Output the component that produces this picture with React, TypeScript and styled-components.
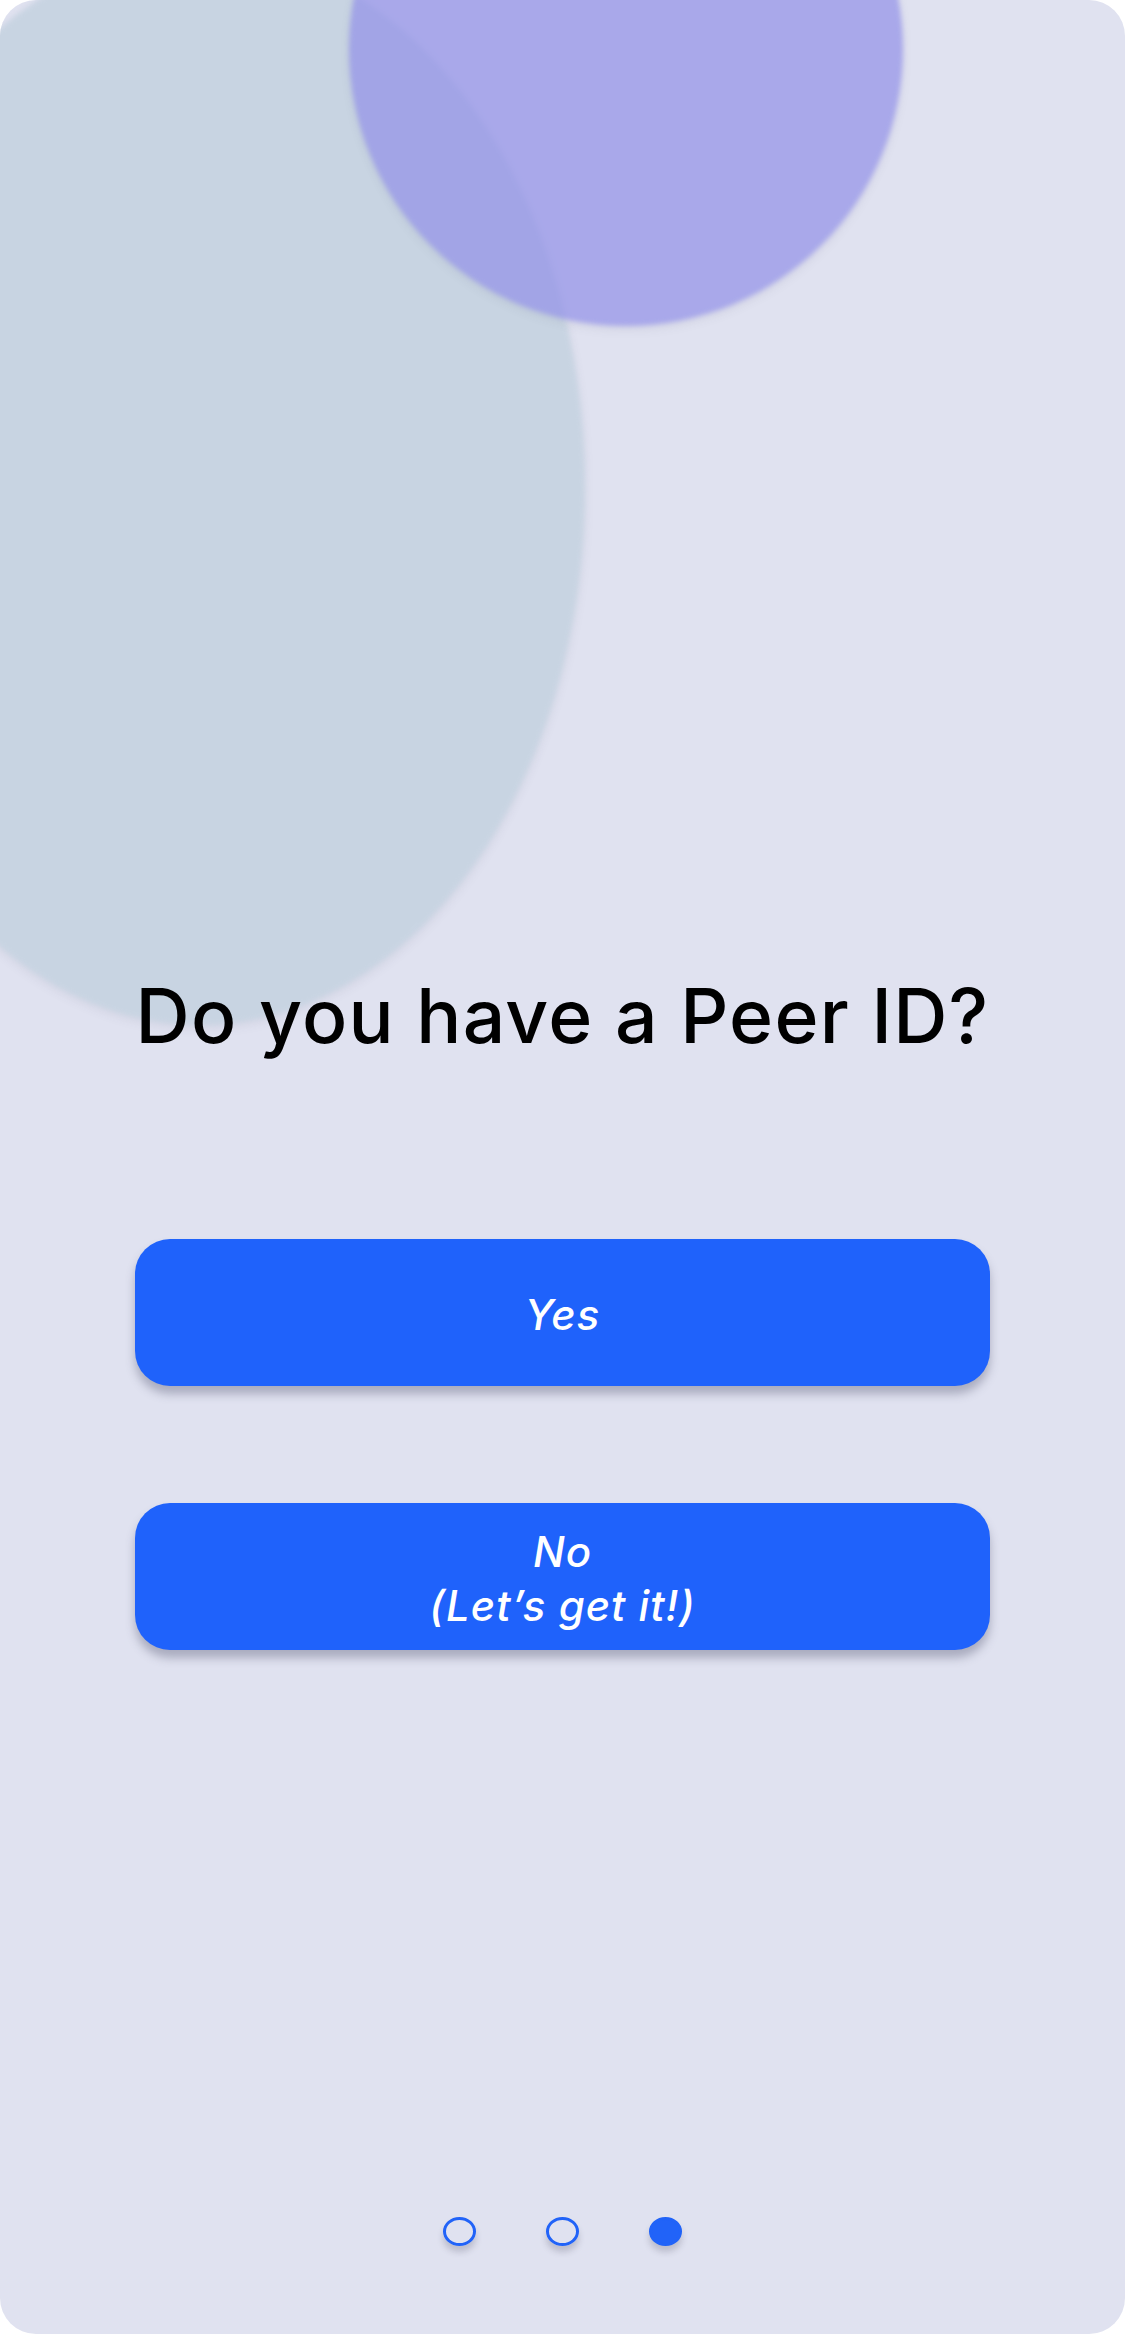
import React from "react";
import styled, { createGlobalStyle } from "styled-components";

const Global = createGlobalStyle`
  html, body {
    margin: 0;
    padding: 0;
    background: #ffffff;
  }
  * { box-sizing: border-box; }
`;

const Screen = styled.div`
  position: relative;
  width: 1125px;
  height: 2334px;
  border-radius: 36px;
  overflow: hidden;
  background: #e0e2f0;
  display: flex;
  flex-direction: column;
  align-items: center;
  font-family: Inter, "Liberation Sans", sans-serif;
`;

const Blob = styled.div<{ $x: number; $y: number; $w: number; $h: number; $color: string }>`
  position: absolute;
  left: ${(p) => p.$x}px;
  top: ${(p) => p.$y}px;
  width: ${(p) => p.$w}px;
  height: ${(p) => p.$h}px;
  border-radius: 50%;
  background: ${(p) => p.$color};
  filter: blur(2.5px);
  box-shadow: 0 4px 8px rgba(60, 60, 90, 0.08);
  pointer-events: none;
`;

const Title = styled.h1`
  position: relative;
  margin: 0;
  padding-top: 972px;
  font-size: 75px;
  line-height: 88px;
  font-weight: 550;
  color: #000000;
  letter-spacing: 1.3px;
  text-align: center;
`;

const Choices = styled.div`
  position: relative;
  margin-top: 179px;
  width: 855px;
  display: flex;
  flex-direction: column;
  gap: 117px;
`;

const Choice = styled.button`
  height: 147px;
  width: 100%;
  border: none;
  border-radius: 35px;
  background: #1f62fb;
  color: #ffffff;
  font-family: Inter, "Liberation Sans", sans-serif;
  font-style: italic;
  font-weight: 500;
  font-size: 42px;
  line-height: 54px;
  letter-spacing: 1px;
  box-shadow: 0 8px 10px rgba(70, 72, 100, 0.35);
  display: flex;
  flex-direction: column;
  align-items: center;
  justify-content: center;
  padding: 4px 0 0;
  cursor: pointer;
`;

const Dots = styled.div`
  position: relative;
  margin-top: auto;
  margin-bottom: 88px;
  display: flex;
  gap: 70px;
`;

const Dot = styled.span<{ $active?: boolean }>`
  width: 33px;
  height: 29px;
  border-radius: 50%;
  border: 3px solid #2163f8;
  background: ${(p) => (p.$active ? "#2163f8" : "transparent")};
  box-shadow: 0 6px 6px rgba(60, 60, 80, 0.22);
`;

export default function App() {
  return (
    <>
      <Global />
      <Screen>
        <Blob $x={-185} $y={-50} $w={770} $h={1075} $color="#c8d4e2" />
        <Blob $x={349} $y={-228} $w={554} $h={554} $color="rgba(147, 145, 231, 0.72)" />
        <Title>Do you have a Peer ID?</Title>
        <Choices>
          <Choice>Yes</Choice>
          <Choice>
            <span>No</span>
            <span>(Let’s get it!)</span>
          </Choice>
        </Choices>
        <Dots>
          <Dot />
          <Dot />
          <Dot $active />
        </Dots>
      </Screen>
    </>
  );
}
